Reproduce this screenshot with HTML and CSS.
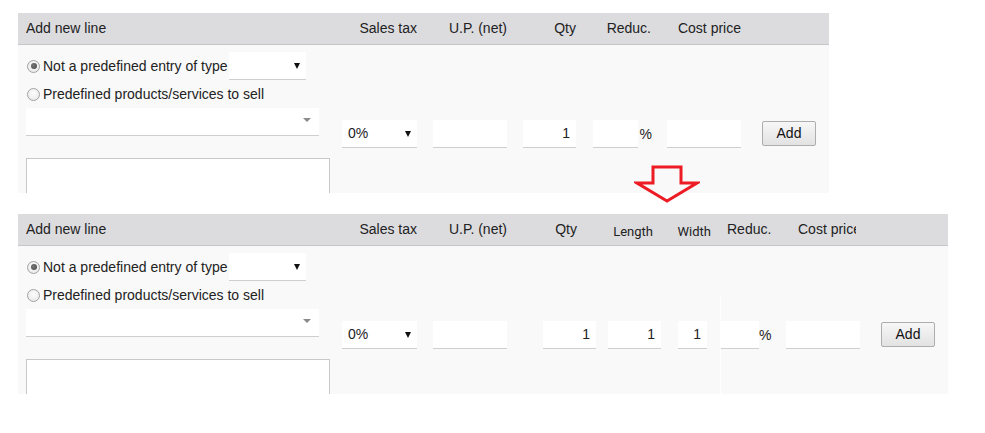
FILE: index.html
```html
<!DOCTYPE html>
<html>
<head>
<meta charset="utf-8">
<link rel="stylesheet" href="styles.css">
</head>
<body>
<div class="page">
  <div class="panel top">
    <div class="hdr">
      <div class="th first">Add new line</div>
      <div class="th">Sales tax</div>
      <div class="th">U.P. (net)</div>
      <div class="th">Qty</div>
      <div class="th">Reduc.</div>
      <div class="th">Cost price</div>
      <div class="th"></div>
    </div>
    <div class="bd">
      <div class="desc">
        <div class="opt"><span class="radio checked"></span><span class="lbl">Not a predefined entry of type</span><div class="field sel sel-type"><span></span><span class="caret"></span></div></div>
        <div class="opt opt2"><span class="radio"></span><span class="lbl">Predefined products/services to sell</span></div>
        <div class="field sel2"><span class="caret2"></span></div>
        <div class="ta"></div>
      </div>
      <div class="td"><div class="field sel w75"><span>0%</span><span class="caret"></span></div></div>
      <div class="td"><div class="field w74"></div></div>
      <div class="td"><div class="field num w53">1</div></div>
      <div class="td reduc-top"><div class="field w45"></div><span class="pct">%</span></div>
      <div class="td"><div class="field w74"></div></div>
      <div class="td add-cell"><div class="btn">Add</div></div>
    </div>
  </div>

  <div class="panel bottom">
    <div class="hdr">
      <div class="th first">Add new line</div>
      <div class="th">Sales tax</div>
      <div class="th">U.P. (net)</div>
      <div class="th">Qty</div>
      <div class="th alt">Length</div>
      <div class="th alt">Width</div>
      <div class="th">Reduc.</div>
      <div class="th cost"><span class="clip">Cost price</span></div>
    </div>
    <div class="bd">
      <div class="desc">
        <div class="opt"><span class="radio checked"></span><span class="lbl">Not a predefined entry of type</span><div class="field sel sel-type"><span></span><span class="caret"></span></div></div>
        <div class="opt opt2"><span class="radio"></span><span class="lbl">Predefined products/services to sell</span></div>
        <div class="field sel2"><span class="caret2"></span></div>
        <div class="ta"></div>
      </div>
      <div class="td"><div class="field sel w75"><span>0%</span><span class="caret"></span></div></div>
      <div class="td"><div class="field w74"></div></div>
      <div class="td"><div class="field num w53">1</div></div>
      <div class="td"><div class="field num w53">1</div></div>
      <div class="td pr13"><div class="field num w29">1</div></div>
      <div class="td reduc-bottom"><div class="field w38"></div><span class="pct">%</span></div>
      <div class="td"><div class="field w74"></div></div>
      <div class="td add-cell"><div class="btn">Add</div></div>
    </div>
  </div>

  <svg class="arrow" width="66" height="42" viewBox="0 0 66 42" xmlns="http://www.w3.org/2000/svg">
    <polygon points="19,3 47,3 47,19 63,19 33,37 3,19 19,19" fill="none" stroke="#ed1c24" stroke-width="3" stroke-linejoin="miter"/>
  </svg>
</div>
</body>
</html>
```

FILE: styles.css
```css
body {
  margin: 0;
  background: #fff;
  font-family: "Liberation Sans", Arial, sans-serif;
  font-size: 14px;
  color: #222;
}

.page {
  position: relative;
  padding: 13px 0 0 18px;
}

.panel {
  background: #f9f9f9;
}

.top {
  width: 811px;
}

.bottom {
  width: 930px;
  margin-top: 21px;
}

.hdr {
  display: grid;
  height: 31px;
  line-height: 31px;
  background: #dcdcdf;
  border-bottom: 1px solid #c6c6c8;
}

.bd {
  display: grid;
  height: 148px;
  overflow: hidden;
}

.top .hdr,
.top .bd {
  grid-template-columns: 316px 91px 90px 69px 75px 90px 80px;
}

.bottom .hdr {
  grid-template-columns: 316px 91px 90px 70px 76px 58px 59px 170px;
}

.bottom .bd {
  grid-template-columns: 316px 91px 90px 89px 65px 51px 58px 90px 80px;
}

.th {
  padding: 0 8px;
  text-align: right;
  white-space: nowrap;
}

.th.first {
  text-align: left;
}

.th.alt {
  font-family: Roboto, "Liberation Sans", sans-serif;
  font-size: 13px;
  padding-top: 2px;
  line-height: 31px;
  color: #222;
}

.th.cost {
  text-align: left;
  padding-left: 20px;
}

.clip {
  display: inline-block;
  width: 58px;
  overflow: hidden;
  vertical-align: top;
}

.desc {
  padding: 7px 8px 0;
}

.opt {
  display: flex;
  align-items: center;
  height: 28px;
}

.radio {
  box-sizing: border-box;
  width: 13px;
  height: 13px;
  margin-left: 1px;
  margin-right: 3px;
  border-radius: 50%;
  border: 1px solid #a3a3a3;
  background: radial-gradient(circle at 50% 40%, #fdfdfd 0%, #e4e4e4 100%);
  position: relative;
  flex: none;
}

.radio.checked::after {
  content: "";
  position: absolute;
  left: 2.5px;
  top: 2.5px;
  width: 6px;
  height: 6px;
  border-radius: 50%;
  background: radial-gradient(circle at 40% 40%, #777, #444);
}

.lbl {
  white-space: nowrap;
}

.field {
  box-sizing: border-box;
  height: 28px;
  line-height: 27px;
  background: #fff;
  border-bottom: 1px solid #cfcfcf;
  flex: none;
}

.sel {
  display: flex;
  justify-content: space-between;
  align-items: center;
  padding: 0 6px;
}

.sel-type {
  width: 77px;
  margin-left: 2px;
}

.caret {
  width: 0;
  height: 0;
  border-left: 3.5px solid transparent;
  border-right: 3.5px solid transparent;
  border-top: 6px solid #111;
}

.sel2 {
  width: 293px;
  display: flex;
  justify-content: flex-end;
  align-items: center;
  padding-right: 8px;
  margin-top: 0;
}

.caret2 {
  width: 0;
  height: 0;
  border-left: 4px solid transparent;
  border-right: 4px solid transparent;
  border-top: 4px solid #8a8a8a;
  margin-top: -3px;
}

.ta {
  box-sizing: border-box;
  width: 304px;
  height: 70px;
  margin-top: 22px;
  background: #fff;
  border: 1px solid #c8c8c8;
}

.td {
  display: flex;
  justify-content: flex-end;
  align-items: flex-start;
  padding: 75px 8px 0;
}

.pr13 {
  padding-right: 13px;
}

.w75 { width: 75px; }
.w74 { width: 74px; }
.w53 { width: 53px; }
.w45 { width: 45px; }
.w38 { width: 38px; }
.w29 { width: 29px; }

.num {
  text-align: right;
  padding-right: 6px;
}

.pct {
  line-height: 28px;
  margin-left: 2px;
}

.reduc-top {
  padding-right: 7px;
}

.reduc-bottom {
  justify-content: flex-start;
  margin-top: 49px;
  padding: 26px 0 0 0;
  border-left: 1px solid #ffffff;
}

.reduc-bottom .pct {
  margin-left: 0;
}

.add-cell {
  justify-content: center;
  padding: 76px 0 0;
}

.btn {
  box-sizing: border-box;
  width: 54px;
  height: 25px;
  line-height: 23px;
  text-align: center;
  color: #111;
  border: 1px solid #adadad;
  border-radius: 2px;
  background: linear-gradient(#f7f7f7, #e2e2e2);
}

.arrow {
  position: absolute;
  left: 634px;
  top: 164px;
}
```
